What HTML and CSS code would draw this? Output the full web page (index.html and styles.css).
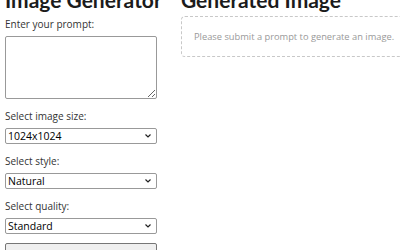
FILE: index.html
```html
<!DOCTYPE html>
<html>
<head>
    <title>Image Generator</title>
    <link rel="stylesheet" href="styles.css">
</head>
<body>

<div class="page">
    <div class="panel">
        <h2>Image Generator</h2>
        <label for="prompt">Enter your prompt:</label>
        <textarea id="prompt"></textarea>

        <label for="size">Select image size:</label>
        <div class="select-wrap">
            <select id="size">
                <option>1024x1024</option>
                <option>1792x1024</option>
                <option>1024x1792</option>
            </select>
            <svg class="chevron" width="6" height="4" viewBox="0 0 6 4"><path d="M0.5 0.5 L3 3 L5.5 0.5" fill="none" stroke="#222" stroke-width="1.2"/></svg>
        </div>

        <label for="style">Select style:</label>
        <div class="select-wrap">
            <select id="style">
                <option>Natural</option>
                <option>Vivid</option>
            </select>
            <svg class="chevron" width="6" height="4" viewBox="0 0 6 4"><path d="M0.5 0.5 L3 3 L5.5 0.5" fill="none" stroke="#222" stroke-width="1.2"/></svg>
        </div>

        <label for="quality">Select quality:</label>
        <div class="select-wrap">
            <select id="quality">
                <option>Standard</option>
                <option>HD</option>
            </select>
            <svg class="chevron" width="6" height="4" viewBox="0 0 6 4"><path d="M0.5 0.5 L3 3 L5.5 0.5" fill="none" stroke="#222" stroke-width="1.2"/></svg>
        </div>

        <button id="generate">Generate Image</button>
    </div>

    <div class="result">
        <h2>Generated Image</h2>
        <div class="placeholder">Please submit a prompt to generate an image.</div>
    </div>
</div>

</body>
</html>
```

FILE: styles.css
```css
html, body {
    overflow: hidden;
}
body {
    margin: 0;
    font-family: "Open Sans", "Noto Sans", sans-serif;
    font-size: 10px;
    color: #333;
    background: #fff;
}
.page {
    display: flex;
    gap: 24px;
    padding-left: 5px;
    margin-top: -12px;
}
h2 {
    margin: 0 0 5px;
    font-family: Lato, "Open Sans", sans-serif;
    font-size: 21px;
    line-height: 24px;
    font-weight: 700;
    color: #1b1b1b;
    white-space: nowrap;
}
.panel {
    display: flex;
    flex-direction: column;
    width: 152px;
    flex-shrink: 0;
}
.panel label {
    display: block;
    line-height: 14px;
    margin: 10px 0 5px;
}
.panel h2 + label {
    margin-top: 0;
}
textarea {
    box-sizing: border-box;
    width: 152px;
    height: 63px;
    border: 1px solid #999;
    border-radius: 2px;
    margin: 0;
}
.select-wrap {
    position: relative;
    width: 152px;
    height: 16px;
}
select {
    box-sizing: border-box;
    appearance: none;
    display: block;
    width: 152px;
    height: 16px;
    margin: 0;
    padding: 0 2px;
    font-family: inherit;
    font-size: 10.5px;
    line-height: 14px;
    color: #000;
    border: 1px solid #999;
    border-radius: 2px;
    background: #fff;
}
.chevron {
    position: absolute;
    right: 6px;
    top: 6px;
    pointer-events: none;
}
button {
    box-sizing: border-box;
    width: 152px;
    height: 22px;
    margin-top: 9px;
    font-family: inherit;
    font-size: 10px;
    background: #efefef;
    border: 1px solid #767676;
    border-radius: 2px;
}
.result {
    flex-shrink: 0;
}
.result h2 {
    margin-bottom: 4px;
}
.placeholder {
    box-sizing: border-box;
    display: flex;
    align-items: center;
    width: 260px;
    height: 41px;
    padding: 0 12px;
    border: 1px dashed #c8c8c8;
    border-radius: 4px;
    font-size: 9.3px;
    color: #999;
}
```
